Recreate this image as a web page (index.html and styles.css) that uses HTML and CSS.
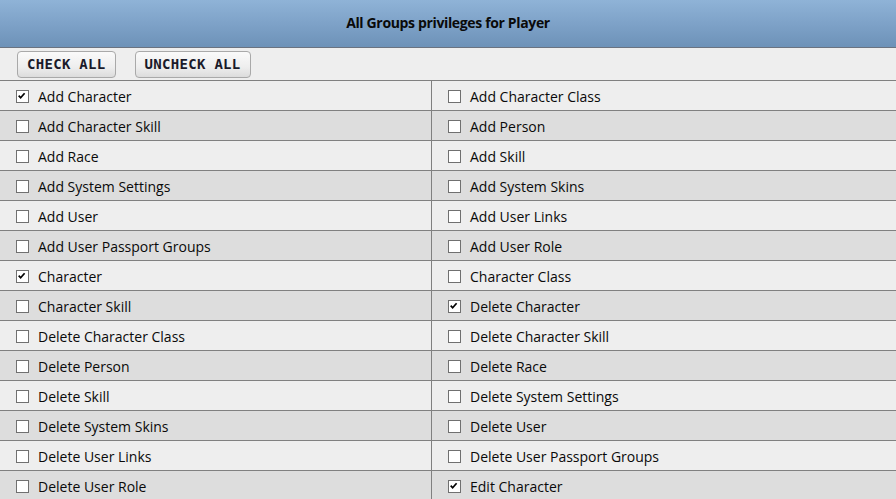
FILE: index.html
```html
<!DOCTYPE html>
<html>
<head>
<meta charset="utf-8">
<link rel="stylesheet" href="styles.css">
</head>
<body>
<div class="page">
  <div class="header">All Groups privileges for Player</div>
  <div class="toolbar">
    <button class="btn">CHECK ALL</button>
    <button class="btn">UNCHECK ALL</button>
  </div>
  <div class="list">
    <div class="row">
      <div class="cell left"><span class="cb on"><svg viewBox="0 0 13 13"><path d="M3 6.5 L5.3 9 L10 3.6" /></svg></span>Add Character</div>
      <div class="cell"><span class="cb"></span>Add Character Class</div>
    </div>
    <div class="row alt">
      <div class="cell left"><span class="cb"></span>Add Character Skill</div>
      <div class="cell"><span class="cb"></span>Add Person</div>
    </div>
    <div class="row">
      <div class="cell left"><span class="cb"></span>Add Race</div>
      <div class="cell"><span class="cb"></span>Add Skill</div>
    </div>
    <div class="row alt">
      <div class="cell left"><span class="cb"></span>Add System Settings</div>
      <div class="cell"><span class="cb"></span>Add System Skins</div>
    </div>
    <div class="row">
      <div class="cell left"><span class="cb"></span>Add User</div>
      <div class="cell"><span class="cb"></span>Add User Links</div>
    </div>
    <div class="row alt">
      <div class="cell left"><span class="cb"></span>Add User Passport Groups</div>
      <div class="cell"><span class="cb"></span>Add User Role</div>
    </div>
    <div class="row">
      <div class="cell left"><span class="cb on"><svg viewBox="0 0 13 13"><path d="M3 6.5 L5.3 9 L10 3.6" /></svg></span>Character</div>
      <div class="cell"><span class="cb"></span>Character Class</div>
    </div>
    <div class="row alt">
      <div class="cell left"><span class="cb"></span>Character Skill</div>
      <div class="cell"><span class="cb on"><svg viewBox="0 0 13 13"><path d="M3 6.5 L5.3 9 L10 3.6" /></svg></span>Delete Character</div>
    </div>
    <div class="row">
      <div class="cell left"><span class="cb"></span>Delete Character Class</div>
      <div class="cell"><span class="cb"></span>Delete Character Skill</div>
    </div>
    <div class="row alt">
      <div class="cell left"><span class="cb"></span>Delete Person</div>
      <div class="cell"><span class="cb"></span>Delete Race</div>
    </div>
    <div class="row">
      <div class="cell left"><span class="cb"></span>Delete Skill</div>
      <div class="cell"><span class="cb"></span>Delete System Settings</div>
    </div>
    <div class="row alt">
      <div class="cell left"><span class="cb"></span>Delete System Skins</div>
      <div class="cell"><span class="cb"></span>Delete User</div>
    </div>
    <div class="row">
      <div class="cell left"><span class="cb"></span>Delete User Links</div>
      <div class="cell"><span class="cb"></span>Delete User Passport Groups</div>
    </div>
    <div class="row alt">
      <div class="cell left"><span class="cb"></span>Delete User Role</div>
      <div class="cell"><span class="cb on"><svg viewBox="0 0 13 13"><path d="M3 6.5 L5.3 9 L10 3.6" /></svg></span>Edit Character</div>
    </div>
  </div>
</div>
</body>
</html>
```

FILE: styles.css
```css
html, body {
  margin: 0;
  padding: 0;
  background: #eeeeee;
}
body {
  font-family: "Open Sans", "Noto Sans", sans-serif;
  font-size: 14px;
  color: #0a0a0a;
  overflow: hidden;
}
.page {
  width: 896px;
}
.header {
  height: 48px;
  border-bottom: 1px solid #6a7380;
  background: linear-gradient(to bottom, #8fb3d7 0%, #7ea2c8 50%, #6d92b8 100%);
  display: flex;
  align-items: center;
  justify-content: center;
  font-weight: bold;
  font-size: 14px;
  letter-spacing: -0.35px;
  color: #0a0a0a;
  box-sizing: border-box;
  padding-bottom: 2px;
}
.toolbar {
  height: 33px;
  box-sizing: border-box;
  border-bottom: 1px solid #808080;
  background: #eeeeee;
  display: flex;
  align-items: center;
  gap: 19px;
  padding-left: 17px;
}
.btn {
  height: 27px;
  padding: 0 9px;
  border: 1px solid #a9a9a9;
  border-radius: 4px;
  background: linear-gradient(to bottom, #fafafa 0%, #eeeeee 60%, #dcdcdc 100%);
  font-family: "DejaVu Sans Mono", monospace;
  font-weight: bold;
  font-size: 14px;
  letter-spacing: 0.3px;
  color: #1a1a2a;
  cursor: pointer;
}
.row {
  display: grid;
  grid-template-columns: 432px 1fr;
  height: 30px;
  box-sizing: border-box;
  border-bottom: 1px solid #808080;
  background: #eeeeee;
}
.row.alt {
  background: #dddddd;
}
.cell {
  display: flex;
  align-items: center;
  padding-left: 16px;
  padding-top: 2px;
}
.cell.left {
  border-right: 1px solid #808080;
}
.cb {
  width: 11px;
  height: 11px;
  border: 1px solid #707070;
  background: #fff;
  margin-right: 9px;
  display: inline-flex;
  flex: none;
}
.cb svg {
  width: 11px;
  height: 11px;
}
.cb svg path {
  fill: none;
  stroke: #000;
  stroke-width: 2;
  transform: translate(-1px, -1px);
}
```
